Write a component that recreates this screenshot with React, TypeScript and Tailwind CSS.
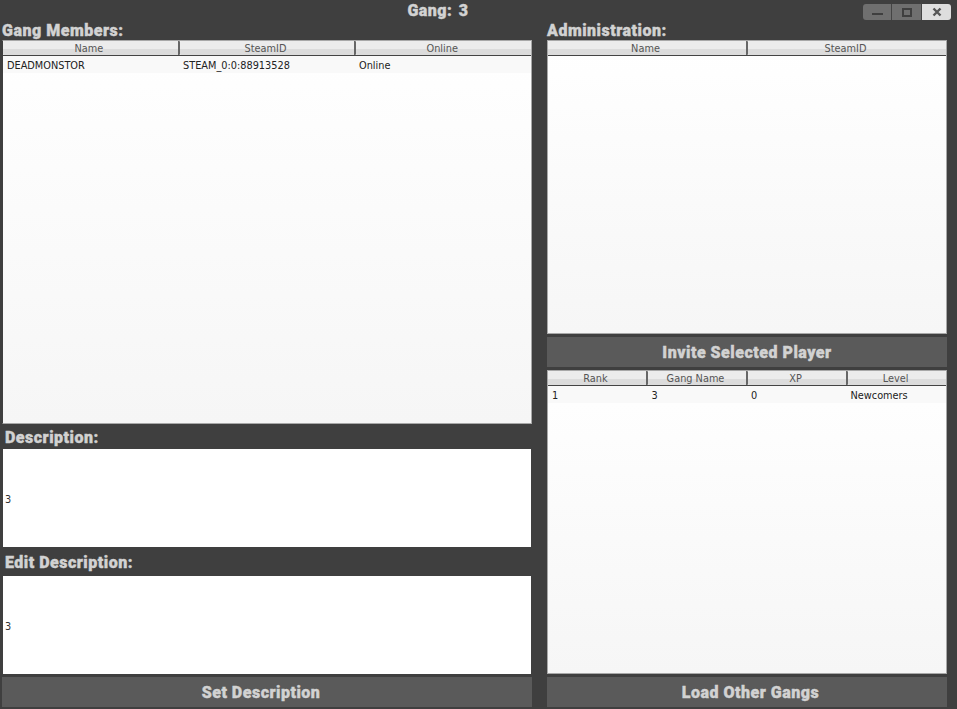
import React from 'react';

const headingFont = "font-['Roboto',sans-serif] font-black text-[#d2d2d2] [-webkit-text-stroke:0.4px_#d2d2d2]";

type TableProps = {
  columns: string[];
  rows: string[][];
  className: string;
};

const DataTable: React.FC<TableProps> = ({ columns, rows, className }) => (
  <div className={`flex flex-col border border-[#a8a8a8] bg-gradient-to-b from-white to-[#f6f6f6] ${className}`}>
    <div className="flex h-[15px] shrink-0 border-b border-[#444]">
      {columns.map((col) => (
        <div
          key={col}
          className="flex flex-1 items-center justify-center rounded-[1px] border-r-2 border-[#666] bg-gradient-to-b from-[#ececec] from-60% to-[#dcdcdc] to-60% pr-[3px] pt-[2px] text-[9.75px] leading-none text-[#555] last:border-r-0"
        >
          {col}
        </div>
      ))}
    </div>
    {rows.map((row) => (
      <div key={row.join('-')} className="flex h-[17px] shrink-0 items-center bg-[#f9f9f9] pt-[3px]">
        {row.map((cell) => (
          <div key={cell} className="flex-1 pl-1 text-[9.75px] leading-none text-[#222]">
            {cell}
          </div>
        ))}
      </div>
    ))}
  </div>
);

const ActionButton: React.FC<{ label: string; className?: string }> = ({ label, className = '' }) => (
  <button className={`h-[30px] w-full shrink-0 bg-[#5a5a5a] pt-[1px] text-[16px] leading-none tracking-[0.5px] ${headingFont} ${className}`}>
    {label}
  </button>
);

const TextPanel: React.FC = () => (
  <div className="flex h-[98px] shrink-0 items-center bg-white pl-0.5 pt-[3px] text-[9.75px] leading-none text-[#333]">3</div>
);

const Label: React.FC<{ text: string; className?: string }> = ({ text, className = '' }) => (
  <div className={`text-[16px] leading-none tracking-[0.5px] ${headingFont} ${className}`}>{text}</div>
);

export default function App() {
  return (
    <div className="flex h-[709px] w-[957px] flex-col overflow-hidden bg-[#3f3f3f] font-['DejaVu_Sans',sans-serif]">
      <div className="flex h-[21px] shrink-0 items-start">
        <div className={`flex-1 pl-[13px] pt-[3px] text-center text-[16px] leading-none tracking-[0.5px] [word-spacing:2px] ${headingFont}`}>
          Gang: 3
        </div>
        <div className="mr-[6px] mt-1 flex h-4 w-[88px]">
          <div className="flex w-[29px] items-center justify-center rounded-l-[3px] border-r border-[#444] bg-[#6f6f6f]">
            <div className="mt-1 h-[2px] w-[11px] bg-[#3f3f3f]" />
          </div>
          <div className="flex w-[30px] items-center justify-center border-r border-[#444] bg-[#6f6f6f]">
            <div className="h-[9px] w-[10px] border-2 border-[#3f3f3f]" />
          </div>
          <div className="flex flex-1 items-center justify-center rounded-r-[3px] bg-[#dedede]">
            <svg width="10" height="10" viewBox="0 0 10 10">
              <path d="M1.5 1.5 L8.5 8.5 M8.5 1.5 L1.5 8.5" stroke="#555" strokeWidth="2.4" />
            </svg>
          </div>
        </div>
      </div>

      <div className="flex flex-1 gap-[15px] pl-[2px]">
        <div className="flex w-[530px] flex-col">
          <Label text="Gang Members:" className="h-[19px] shrink-0 pt-[2px]" />
          <DataTable
            className="h-[384px] w-[530px] shrink-0 border-l-[#3f3f3f]"
            columns={['Name', 'SteamID', 'Online']}
            rows={[['DEADMONSTOR', 'STEAM_0:0:88913528', 'Online']]}
          />
          <Label text="Description:" className="flex h-[25px] shrink-0 items-center pl-[3px] pt-[2px]" />
          <div className="ml-[1px] w-[528px]">
            <TextPanel />
          </div>
          <Label text="Edit Description:" className="flex h-[29px] shrink-0 items-center pl-[3px] pt-[2px]" />
          <div className="ml-[1px] w-[528px]">
            <TextPanel />
          </div>
          <div className="mt-[3px]">
            <ActionButton label="Set Description" className="pr-[12px]" />
          </div>
        </div>

        <div className="flex w-[400px] flex-col">
          <Label text="Administration:" className="h-[19px] shrink-0 pt-[2px]" />
          <DataTable
            className="h-[294px] w-[400px] shrink-0"
            columns={['Name', 'SteamID']}
            rows={[]}
          />
          <div className="mt-[3px]">
            <ActionButton label="Invite Selected Player" />
          </div>
          <DataTable
            className="mt-[3px] h-[304px] w-[400px] shrink-0"
            columns={['Rank', 'Gang Name', 'XP', 'Level']}
            rows={[['1', '3', '0', 'Newcomers']]}
          />
          <div className="mt-[3px]">
            <ActionButton label="Load Other Gangs" className="pl-[7px]" />
          </div>
        </div>
      </div>
    </div>
  );
}
